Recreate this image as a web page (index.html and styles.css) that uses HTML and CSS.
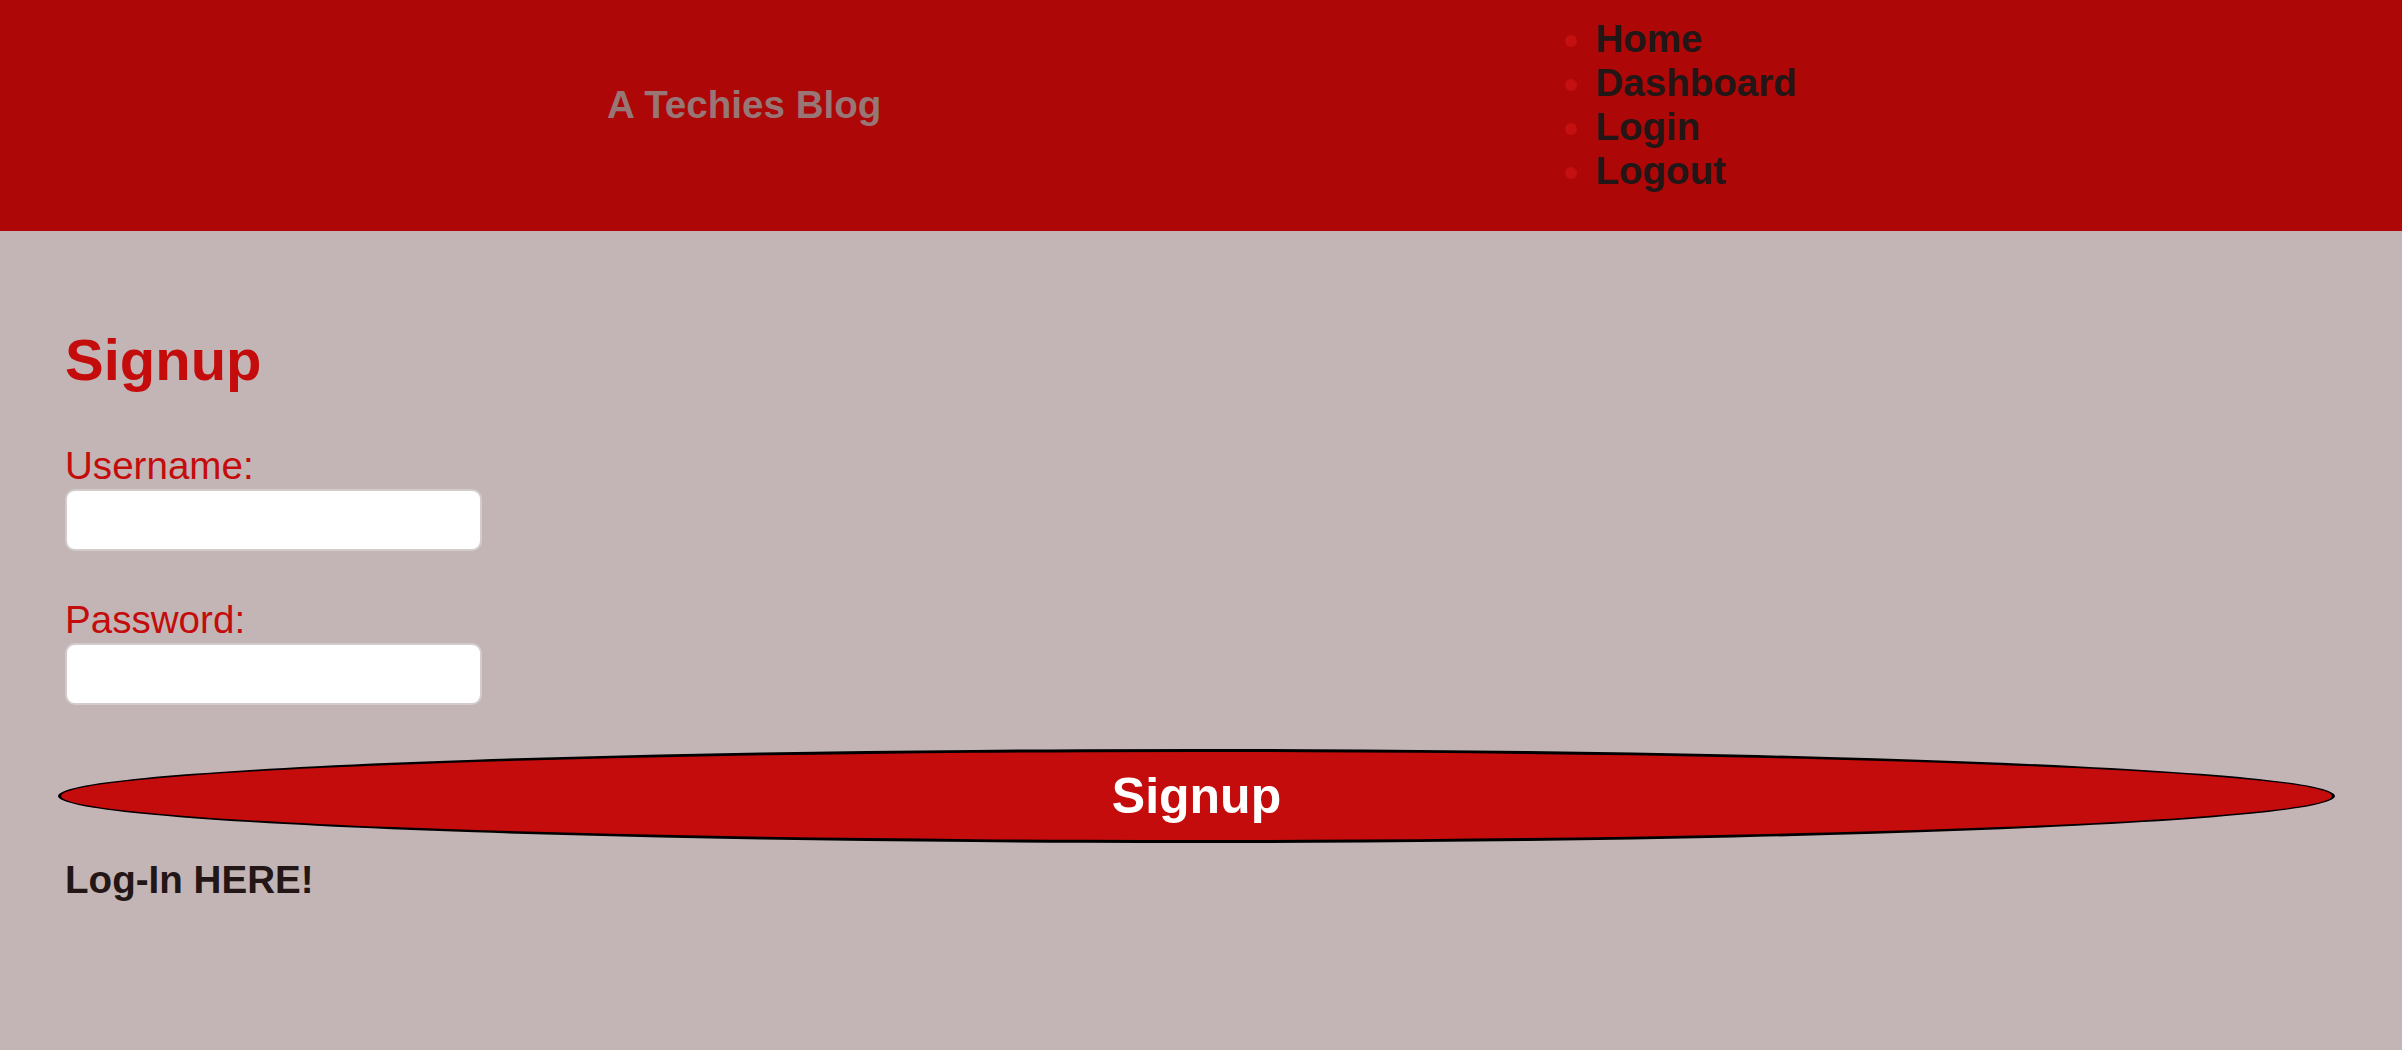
FILE: index.html
```html
<!DOCTYPE html>
<html lang="en">
<head>
    <meta charset="UTF-8">
    <meta name="viewport" content="width=device-width, initial-scale=1.0">
    <title>A Techies Blog - Signup</title>
    <link rel="stylesheet" href="styles.css">
</head>
<body>
    <header class="site-header">
        <h2 class="site-title">A Techies Blog</h2>
        <nav>
            <ul class="nav-list">
                <li><a href="/">Home</a></li>
                <li><a href="/dashboard">Dashboard</a></li>
                <li><a href="/login">Login</a></li>
                <li><a href="/logout">Logout</a></li>
            </ul>
        </nav>
    </header>

    <main class="content">
        <form class="signup-form">
            <h1 class="form-title">Signup</h1>

            <div class="field">
                <label for="username">Username:</label>
                <input type="text" id="username" name="username">
            </div>

            <div class="field">
                <label for="password">Password:</label>
                <input type="password" id="password" name="password">
            </div>

            <button type="submit" class="signup-btn">Signup</button>

            <a class="login-link" href="/login">Log-In HERE!</a>
        </form>
    </main>
</body>
</html>
```

FILE: styles.css
```css
body {
    font-family: 'Liberation Sans', Arial, sans-serif;
    background: #c3b5b5;
    margin: 0;
    min-height: 100vh;
}

.site-header {
    background: #ad0707;
    display: flex;
    align-items: center;
    padding: 17px 0 38px 607px;
    gap: 674px;
}

.site-title {
    margin: 0;
    font-size: 38.6px;
    font-weight: bold;
    color: #987676;
}

.nav-list {
    margin: 0;
    padding-left: 40px;
    font-size: 38.6px;
    color: #c41010;
}

.nav-list a {
    color: #231616;
    font-weight: bold;
    text-decoration: none;
}

.content {
    padding: 95px 67px 40px 58px;
}

.form-title {
    margin: 0 0 51px 7px;
    font-size: 58px;
    color: #c40c0c;
}

.field {
    margin: 0 0 47px 7px;
    display: flex;
    flex-direction: column;
    align-items: flex-start;
}

.field:last-of-type {
    margin-bottom: 44px;
}

.field label {
    font-size: 38.6px;
    color: #c40c0c;
    margin-bottom: 1px;
}

.field input {
    box-sizing: border-box;
    width: 417px;
    height: 62px;
    border: 2px solid #d2cccc;
    border-radius: 10px;
    background: white;
    font-size: 24px;
}

.signup-btn {
    display: block;
    width: 100%;
    box-sizing: border-box;
    padding: 15px 0;
    background: #c40c0c;
    color: white;
    font-family: inherit;
    font-size: 50px;
    font-weight: bold;
    border: 3px solid #000;
    border-radius: 50%;
    cursor: pointer;
}

.login-link {
    display: inline-block;
    margin: 15px 0 0 7px;
    font-size: 38.6px;
    font-weight: bold;
    color: #231616;
    text-decoration: none;
}
```
